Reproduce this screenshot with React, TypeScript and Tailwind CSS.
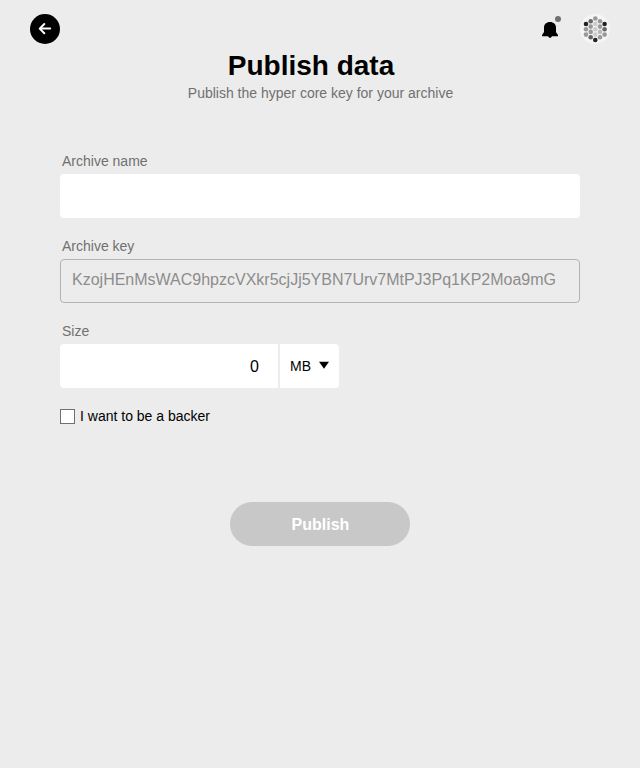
import React, { useState } from 'react';

const dots: [number, number, string][] = [
  [6, 10, '#222222'], [6, 15.3, '#999999'], [6, 20.6, '#999999'],
  [10.7, 7.2, '#666666'], [10.7, 12.6, '#999999'], [10.7, 17.9, '#999999'], [10.7, 23.2, '#666666'],
  [15.3, 4.5, '#999999'], [15.3, 9.9, '#cccccc'], [15.3, 15.2, '#cccccc'], [15.3, 20.6, '#cccccc'], [15.3, 26, '#222222'],
  [20, 7.2, '#999999'], [20, 12.6, '#999999'], [20, 17.9, '#bbbbbb'], [20, 23.2, '#999999'],
  [24.6, 10, '#222222'], [24.6, 15.3, '#666666'], [24.6, 20.6, '#999999'],
];

function Avatar() {
  return (
    <svg width="30" height="30" viewBox="0 0 30 30">
      <circle cx="15" cy="15" r="15" fill="#f5f5f5" />
      {dots.map(([x, y, fill]) => (
        <circle key={`${x}-${y}`} cx={x} cy={y} r="2.3" fill={fill} />
      ))}
    </svg>
  );
}

function Header() {
  return (
    <header className="flex h-[44px] items-start justify-between px-[30px] pt-[14px]">
      <button aria-label="Back" className="size-[30px] rounded-full bg-black">
        <svg width="30" height="30" viewBox="0 0 30 30" fill="none" stroke="white" strokeWidth="2" strokeLinecap="round" strokeLinejoin="round">
          <path d="M20.2 14.6H9.9M14.3 10l-4.6 4.6 4.6 4.6" />
        </svg>
      </button>
      <div className="flex gap-[20px]">
        <button aria-label="Notifications">
          <svg className="overflow-visible" width="20" height="30" viewBox="0 0 20 30">
            <path d="M10 8C6.300 8 4 10.300 4 13.700v3.800c0 .9-.3 1.300-1 2.100-1 1-1 2.600-1 2.600h6.100c.2.900.9 1.500 1.900 1.500s1.700-.6 1.900-1.500H18s0-1.600-1-2.600c-.7-.8-1-1.200-1-2.100v-3.800C16 10.300 13.700 8 10 8z" />
            <circle cx="18" cy="5" r="3" fill="#707070" />
          </svg>
        </button>
        <Avatar />
      </div>
    </header>
  );
}

export default function App() {
  const [name, setName] = useState('');
  const [size, setSize] = useState('0');
  return (
    <div className="min-h-screen bg-[#ececec] font-['Liberation_Sans',Arial,sans-serif] text-black">
      <Header />
      <div className="text-center">
        <h1 className="pt-[6px] pr-[18px] text-[28px] leading-[32px] font-bold">Publish data</h1>
        <p className="pt-[3px] pl-[1px] text-[14px] leading-[16px] text-[#707070]">Publish the hyper core key for your archive</p>
      </div>
      <form className="mt-[52px] flex flex-col px-[60px]" onSubmit={(e) => e.preventDefault()}>
        <label className="pl-[2px] text-[14px] leading-[16px] text-[#707070]" htmlFor="name">Archive name</label>
        <input id="name" value={name} onChange={(e) => setName(e.target.value)} className="mt-[5px] h-[44px] rounded-[4px] bg-white px-3 text-[16px] outline-none" />
        <div className="mt-[20px] pl-[2px] text-[14px] leading-[16px] text-[#707070]">Archive key</div>
        <div className="mt-[5px] h-[44px] rounded-[4px] border border-[#b3b3b3] pt-[10px] pl-[11px] text-[16px] leading-[20px] text-[#8c8c8c]">
          KzojHEnMsWAC9hpzcVXkr5cjJj5YBN7Urv7MtPJ3Pq1KP2Moa9mG
        </div>
        <label className="mt-[20px] pl-[2px] text-[14px] leading-[16px] text-[#707070]" htmlFor="size">Size</label>
        <div className="mt-[5px] flex h-[44px]">
          <input id="size" value={size} onChange={(e) => setSize(e.target.value)} className="w-[218px] rounded-l-[4px] bg-white pt-[2px] pr-[19px] text-right text-[16px] outline-none" />
          <button type="button" className="ml-[2px] flex w-[59px] items-center rounded-r-[4px] bg-white pl-[10px] text-[14px]">
            MB
            <svg className="mb-[3px] ml-[8px]" width="10" height="8" viewBox="0 0 10 8"><path d="M0 .7h10L5 7.700z" /></svg>
          </button>
        </div>
        <label className="mt-[20px] flex h-[16px] items-center gap-[5px] text-[14px] leading-[16px]">
          <input type="checkbox" className="size-[15px] appearance-none border border-[#707070] bg-white" />
          I want to be a backer
        </label>
        <button type="submit" className="mt-[78px] h-[44px] w-[180px] self-center rounded-full bg-[#c8c8c8] pt-[2px] pl-[1px] text-[16px] font-bold text-white">Publish</button>
      </form>
    </div>
  );
}
